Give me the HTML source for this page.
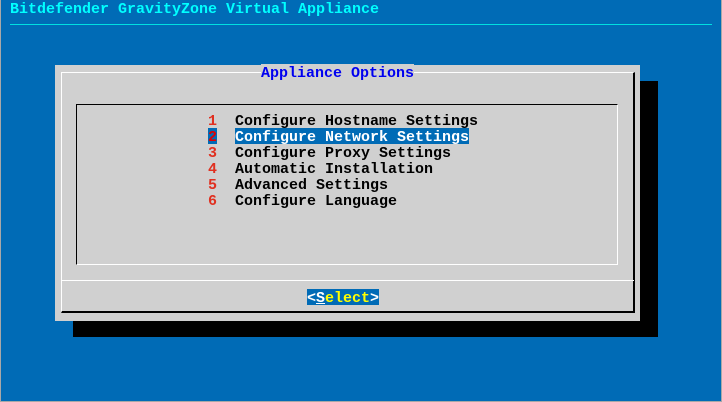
<!DOCTYPE html>
<html><head><style>
*{margin:0;padding:0;box-sizing:border-box}
body{width:722px;height:402px;background:#006bb6;position:relative;overflow:hidden;font-family:"Liberation Mono",monospace;font-size:15px;font-weight:bold;}
.t{position:absolute;height:16px;line-height:16px;white-space:pre;padding-top:2px;line-height:15px}
.a{position:absolute}
</style></head><body>
<div class="a" style="left:0;top:0;width:722px;height:402px;border:1px solid #a8a8a8;border-top:none"></div>
<div class="t" style="left:10px;top:0;color:#00ffff">Bitdefender GravityZone Virtual Appliance</div>
<div class="a" style="left:10px;top:24px;width:702px;height:1px;background:#00e0e0"></div>
<div class="a" style="left:73px;top:81px;width:585px;height:256px;background:#000"></div>
<div class="a" style="left:55px;top:65px;width:585px;height:256px;background:#d0d0d0"></div>
<div class="a" style="left:61px;top:72px;width:574px;height:241px;border-top:1px solid #fff;border-left:1px solid #fff;border-right:2px solid #000;border-bottom:2px solid #000"></div>
<div class="t" style="left:261px;top:64px;color:#0000f0;background:#d0d0d0">Appliance Options</div>
<div class="a" style="left:76px;top:104px;width:542px;height:161px;border-top:1px solid #000;border-left:1px solid #000;border-right:1px solid #fff;border-bottom:1px solid #fff"></div>
<div class="a" style="left:62px;top:280px;width:572px;height:1px;background:#fff"></div>
<div class="t" style="left:208px;top:112px;color:#e03020">1</div>
<div class="t" style="left:235px;top:112px;color:#000">Configure Hostname Settings</div>
<div class="t" style="left:208px;top:128px;color:#e00000;background:#006bb6;width:9px">2</div>
<div class="t" style="left:235px;top:128px;color:#fff;background:#006bb6">Configure Network Settings</div>
<div class="t" style="left:208px;top:144px;color:#e03020">3</div>
<div class="t" style="left:235px;top:144px;color:#000">Configure Proxy Settings</div>
<div class="t" style="left:208px;top:160px;color:#e03020">4</div>
<div class="t" style="left:235px;top:160px;color:#000">Automatic Installation</div>
<div class="t" style="left:208px;top:176px;color:#e03020">5</div>
<div class="t" style="left:235px;top:176px;color:#000">Advanced Settings</div>
<div class="t" style="left:208px;top:192px;color:#e03020">6</div>
<div class="t" style="left:235px;top:192px;color:#000">Configure Language</div>
<div class="t" style="left:307px;top:289px;background:#006bb6;color:#ffff00"><span style="color:#fff">&lt;</span><span style="color:#fff;text-decoration:underline">S</span>elect<span style="color:#fff">&gt;</span></div>
</body></html>
